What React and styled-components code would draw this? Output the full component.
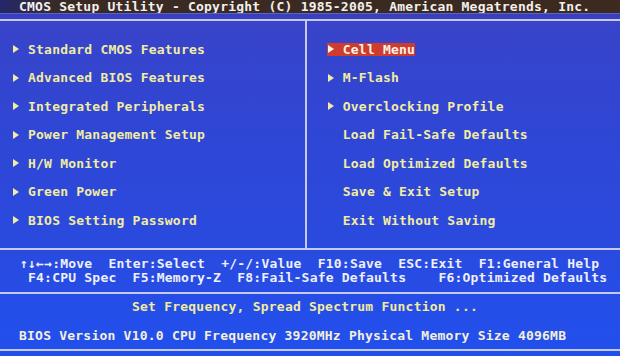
import styled, { createGlobalStyle } from "styled-components";

const GlobalStyle = createGlobalStyle`
  html, body {
    margin: 0;
    padding: 0;
    background: #2a48dc;
  }
  body {
    width: 620px;
    height: 356px;
    overflow: hidden;
    font-family: "DejaVu Sans Mono", "Liberation Mono", monospace;
    font-weight: bold;
    font-size: 13px;
    letter-spacing: 0.22px;
  }
`;

const leftMenu = [
  "Standard CMOS Features",
  "Advanced BIOS Features",
  "Integrated Peripherals",
  "Power Management Setup",
  "H/W Monitor",
  "Green Power",
  "BIOS Setting Password",
];

const rightMenu = [
  { title: "Cell Menu", sub: true, active: true },
  { title: "M-Flash", sub: true },
  { title: "Overclocking Profile", sub: true },
  { title: "Load Fail-Safe Defaults" },
  { title: "Load Optimized Defaults" },
  { title: "Save & Exit Setup" },
  { title: "Exit Without Saving" },
];

export default function App() {
  return (
    <>
      <GlobalStyle />
      <Screen>
        <TitleBar>
          CMOS Setup Utility - Copyright (C) 1985-2005, American Megatrends, Inc.
        </TitleBar>
        <TitleGap />
        <Rule />
        <MenuArea>
          <Column $pad={12}>
            {leftMenu.map((item) => (
              <MenuRow key={item}>
                <MenuItem>
                  <Arrow />
                  {item}
                </MenuItem>
              </MenuRow>
            ))}
          </Column>
          <Divider />
          <Column $pad={20}>
            {rightMenu.map((item) => (
              <MenuRow key={item.title}>
                <MenuItem $active={item.active}>
                  {item.sub ? <Arrow /> : <ArrowSpace />}
                  {item.title}
                </MenuItem>
              </MenuRow>
            ))}
          </Column>
        </MenuArea>
        <Rule />
        <HelpBox>
          <HelpLine $pad={20}>{"↑↓←→:Move  Enter:Select  +/-/:Value  F10:Save  ESC:Exit  F1:General Help"}</HelpLine>
          <HelpLine $pad={28}>{"F4:CPU Spec  F5:Memory-Z  F8:Fail-Safe Defaults    F6:Optimized Defaults"}</HelpLine>
        </HelpBox>
        <Rule />
        <InfoBox>
          <InfoLine $pad={132} $color="#f2eba0">Set Frequency, Spread Spectrum Function ...</InfoLine>
          <InfoLine $pad={19} $color="#f4f0dc">BIOS Version V10.0 CPU Frequency 3920MHz Physical Memory Size 4096MB</InfoLine>
        </InfoBox>
        <Rule />
      </Screen>
    </>
  );
}

const Screen = styled.div`
  width: 620px;
  height: 356px;
  display: flex;
  flex-direction: column;
  background: linear-gradient(180deg, #3a43c6 0px, #3046d4 120px, #2a4ade 240px, #2150ee 356px);
  white-space: pre;
`;

const TitleBar = styled.div`
  height: 13px;
  line-height: 13px;
  padding-left: 19px;
  color: #f2f0ec;
  background: linear-gradient(90deg, #24286a 0px, #3a2a24 60px, #3c2a1e 100%);
`;

const TitleGap = styled.div`
  height: 6px;
  border-top: 1px solid #5c62c8;
  box-sizing: border-box;
  background: #3940c0;
`;

const Rule = styled.div`
  height: 2px;
  flex-shrink: 0;
  background: #c6caf2;
`;

const MenuArea = styled.div`
  display: flex;
  height: 227px;
`;

const Column = styled.div`
  flex: 1;
  padding: 14px 0 0 ${(p) => p.$pad}px;
  display: flex;
  flex-direction: column;
`;

const Divider = styled.div`
  width: 1.5px;
  background: #c6caf2;
`;

const MenuRow = styled.div`
  height: 28.5px;
  display: flex;
  align-items: center;
`;

const MenuItem = styled.span`
  display: inline-flex;
  align-items: center;
  height: 13px;
  line-height: 13px;
  color: ${(p) => (p.$active ? "#fbf4e8" : "#f2eca2")};
  background: ${(p) => (p.$active ? "#d03c2c" : "transparent")};
`;

const Arrow = styled.span`
  width: 16px;
  height: 13px;
  position: relative;
  flex-shrink: 0;
  &::before {
    content: "";
    position: absolute;
    left: 1px;
    top: 2.5px;
    border-left: 6px solid currentColor;
    border-top: 4px solid transparent;
    border-bottom: 4px solid transparent;
  }
`;

const ArrowSpace = styled.span`
  width: 16px;
  flex-shrink: 0;
`;

const HelpBox = styled.div`
  height: 42px;
  padding-top: 7px;
  box-sizing: border-box;
  display: flex;
  flex-direction: column;
`;

const HelpLine = styled.div`
  height: 14px;
  line-height: 14px;
  padding-left: ${(p) => p.$pad}px;
  color: #eef0fa;
`;

const InfoBox = styled.div`
  height: 55px;
  padding-top: 6px;
  box-sizing: border-box;
  display: flex;
  flex-direction: column;
  gap: 15px;
`;

const InfoLine = styled.div`
  height: 14px;
  line-height: 14px;
  padding-left: ${(p) => p.$pad}px;
  color: ${(p) => p.$color};
`;
